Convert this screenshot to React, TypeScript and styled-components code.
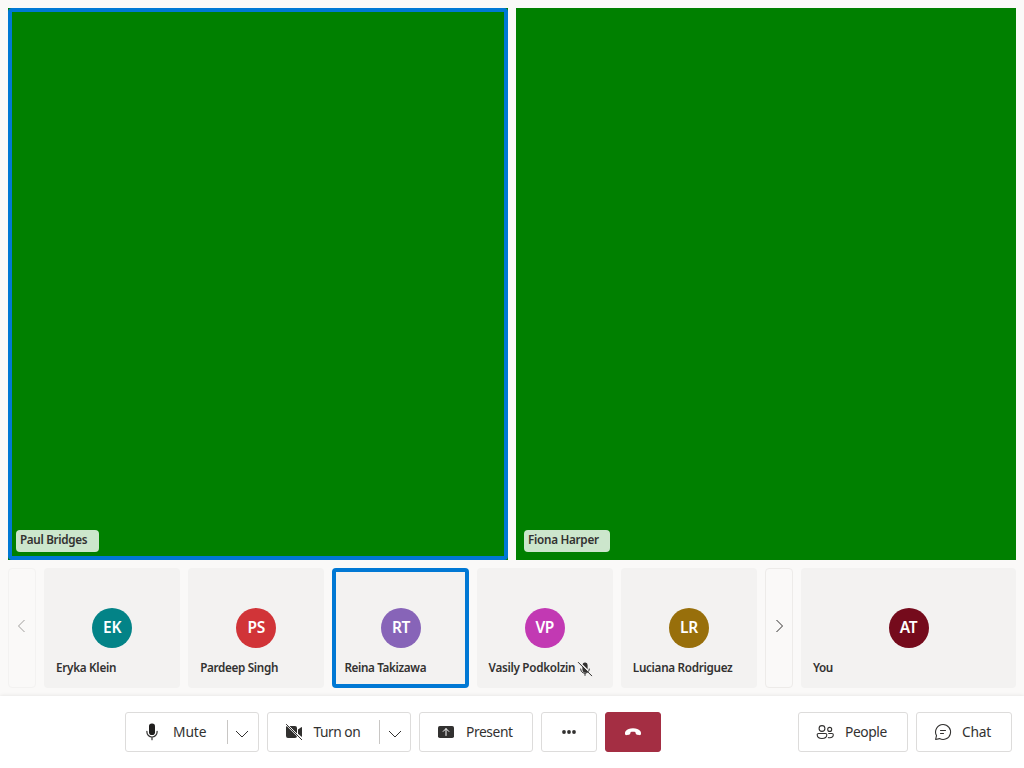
import React from 'react';
import styled, { createGlobalStyle, css } from 'styled-components';

const GlobalStyle = createGlobalStyle`
  *, *::before, *::after { box-sizing: border-box; }
  body {
    margin: 0;
    background: #faf9f8;
    color: #323130;
    font-family: 'Segoe UI', 'Noto Sans', 'Open Sans', sans-serif;
  }
  button { font: inherit; color: inherit; padding: 0; margin: 0; }
`;

const Screen = styled.div`
  display: flex;
  flex-direction: column;
  width: 1024px;
  height: 768px;
  overflow: hidden;
`;

const Stage = styled.main`
  flex: 1;
  min-height: 0;
  display: flex;
  flex-direction: column;
  gap: 8px;
  padding: 8px;
`;

const VideoGrid = styled.section`
  flex: 1;
  display: grid;
  grid-template-columns: 1fr 1fr;
  gap: 8px;
`;

const speakingRing = css`
  &::after {
    content: '';
    position: absolute;
    inset: 0;
    border: 4px solid #0078d4;
    border-radius: 4px;
  }
`;

const VideoTile = styled.article<{ $speaking?: boolean }>`
  position: relative;
  display: flex;
  align-items: flex-end;
  padding: 8px;
  background: #008000;
  ${(p) => p.$speaking && speakingRing}
`;

const NameLabel = styled.span<{ $spacing: number }>`
  font-size: 11.7px;
  line-height: 14px;
  padding-bottom: 2px;
  font-weight: 600;
  white-space: nowrap;
  letter-spacing: ${(p) => p.$spacing}px;
`;

const NameTag = styled.div<{ $width: number }>`
  width: ${(p) => p.$width}px;
  height: 22px;
  padding: 2px 4px;
  display: flex;
  background: rgba(255, 255, 255, 0.8);
  border-radius: 4px;
`;

const Strip = styled.section`
  display: flex;
  gap: 8px;
  height: 120px;
`;

const StripTiles = styled.div`
  flex: 1;
  display: grid;
  grid-template-columns: repeat(5, 1fr);
  gap: 8px;
`;

const PageButton = styled.button`
  width: 28px;
  display: flex;
  align-items: center;
  justify-content: center;
  padding-bottom: 4px;
  background: none;
  border: 1px solid #edebe9;
  border-radius: 4px;
  color: #323130;
  &:disabled { color: #a19f9d; border-color: #f3f2f1; }
`;

const PersonTile = styled.article<{ $speaking?: boolean; $self?: boolean }>`
  position: relative;
  display: flex;
  flex-direction: column;
  align-items: center;
  min-width: 0;
  width: ${(p) => (p.$self ? '215px' : 'auto')};
  padding: 40px 12px 0;
  background: #f3f2f1;
  border-radius: 4px;
  ${(p) => p.$speaking && speakingRing}
`;

const Avatar = styled.div<{ $color: string; $inset?: boolean }>`
  width: 40px;
  height: 40px;
  margin-left: ${(p) => (p.$inset ? 1 : 0)}px;
  border-radius: 50%;
  background: ${(p) => p.$color};
  color: #fff;
  font-size: 15.5px;
  line-height: 39px;
  font-weight: 600;
  letter-spacing: -0.35px;
  text-align: center;
`;

const PersonName = styled.div`
  align-self: stretch;
  display: flex;
  align-items: center;
  gap: 2px;
  height: 16px;
  margin-top: 12px;
  svg { flex: none; position: relative; top: 1px; }
`;

const ControlBar = styled.footer`
  display: flex;
  align-items: center;
  height: 72px;
  padding-right: 12px;
  gap: 12px;
  background: #fff;
  box-shadow: 0 0 4px rgba(0, 0, 0, 0.1);
`;

const CallControls = styled.div`
  flex: 1;
  display: flex;
  justify-content: center;
  gap: 8px;
`;

const SideControls = styled.div`
  display: flex;
  gap: 8px;
`;

const ControlButton = styled.button<{ $width: number; $danger?: boolean }>`
  width: ${(p) => p.$width}px;
  height: 40px;
  display: flex;
  align-items: center;
  padding: 0 0 0 ${(p) => (p.$width === 56 ? 17 : 16)}px;
  background: ${(p) => (p.$danger ? '#a42e43' : '#fff')};
  color: ${(p) => (p.$danger ? '#fff' : '#323130')};
  border: 1px solid ${(p) => (p.$danger ? '#a42e43' : '#dddcdb')};
  border-radius: 3px;
  svg { flex: none; }
`;

const ControlLabel = styled.span<{ $spacing: number; $gap?: number }>`
  flex: 1;
  margin-left: ${(p) => p.$gap ?? 10}px;
  text-align: left;
  font-size: 13.8px;
  line-height: 20px;
  white-space: nowrap;
  letter-spacing: ${(p) => p.$spacing}px;
`;

const SplitArrow = styled.span<{ $inset: number }>`
  width: 31px;
  height: 24px;
  display: flex;
  align-items: center;
  justify-content: center;
  padding: 4px ${(p) => p.$inset}px 0 0;
  border-left: 1px solid #c8c6c4;
`;

const Chevron = ({ dir }: { dir: 'left' | 'right' | 'down' }) => (
  <svg width="14" height="14" viewBox="0 0 14 14" fill="none" stroke="currentColor" strokeWidth="1">
    {dir === 'left' && <path d="M9.500 1l-6 6 6 6" />}
    {dir === 'right' && <path d="m4.500 1 6 6-6 6" />}
    {dir === 'down' && <path d="m1 4 6 6 6-6" />}
  </svg>
);

const MicIcon = () => (
  <svg width="20" height="20" viewBox="0 0 20 20">
    <rect x="7" y="1.500" width="6" height="11.500" rx="2.800" fill="#201f1e" />
    <path d="M4.900 9.300v.7a5.100 5 0 0 0 10.200 0v-.7M10 15v2.700" fill="none" stroke="currentColor" strokeWidth="1.200" strokeLinecap="round" />
  </svg>
);

const MicOffIcon = () => (
  <svg width="16" height="16" viewBox="0 0 16 16" fill="none" stroke="currentColor">
    <path d="M5.400 5.200 10.500 10.200A2.700 2.700 0 0 1 5.400 8.800zM5.500 3.300A2.600 2.600 0 0 1 10.600 4v4.300z" fill="currentColor" stroke="none" />
    <path d="M3.600 8a4.300 4.300 0 0 0 6.900 3.400M12.300 8q0 1.100-.6 2.200M8 12.400v2M1.300 1.400l13.400 13.400" strokeLinecap="round" />
  </svg>
);

const CameraOffIcon = () => (
  <svg width="20" height="20" viewBox="0 0 20 20" fill="currentColor">
    <path d="M2.700 4 13 14.300V14a2 2 0 0 1-2 2H4a2 2 0 0 1-2-2V5zM5.300 4h5.700A2 2 0 0 1 13 6v5.700zM14 7.500l3.200-2.300q.8-.4.8.5v8.600q0 .6-.5.500L14 11.700z" />
    <path d="m2.400 2.400 15.300 15.300" fill="none" stroke="currentColor" strokeLinecap="round" />
    <path d="m3.500 2.500 9.500 9.500" fill="none" stroke="#fff" strokeWidth=".7" />
  </svg>
);

const PresentIcon = () => (
  <svg width="20" height="20" viewBox="0 0 20 20">
    <rect x="2" y="4" width="16" height="12" rx="1.800" fill="currentColor" />
    <path d="M10 13.500V6.700M7.200 9.400 10 6.600l2.800 2.800" fill="none" stroke="#fff" strokeLinecap="round" strokeLinejoin="round" />
  </svg>
);

const MoreIcon = () => (
  <svg width="20" height="20" viewBox="0 0 20 20" fill="currentColor">
    <circle cx="5" cy="10" r="1.900" /><circle cx="10" cy="10" r="1.900" /><circle cx="15" cy="10" r="1.900" />
  </svg>
);

const HangUpIcon = () => (
  <svg width="20" height="20" viewBox="0 0 20 20" fill="currentColor">
    <path d="M10 6.200c3.500 0 5.700 1 7 2.500 1 1.100 1.200 2.500.9 3.500-.2.800-.9 1.100-1.700.9l-2.200-.4c-.7-.1-1.100-.5-1.300-1.200l-.4-1.400c-1.300-.5-3.300-.5-4.600 0l-.4 1.400c-.2.700-.6 1.100-1.300 1.200l-2.200.4c-.8.200-1.500-.1-1.700-.9-.3-1-.1-2.400.9-3.500 1.300-1.500 3.500-2.500 7-2.500z" />
  </svg>
);

const PeopleIcon = () => (
  <svg width="20" height="20" viewBox="0 0 20 20" fill="none" stroke="currentColor" strokeWidth="1.100">
    <circle cx="7" cy="6.500" r="2.900" />
    <circle cx="14.700" cy="7.400" r="2" />
    <path d="M3.500 11.500h7a1.300 1.300 0 0 1 1.300 1.300c0 2.500-2 3.700-4.800 3.700S2.200 15.300 2.200 12.800a1.300 1.300 0 0 1 1.300-1.300zM13.300 11.500h3.700a1.300 1.300 0 0 1 1.300 1.300c0 2-1.500 2.900-3.500 2.900-.7 0-1.300-.1-1.900-.3" />
  </svg>
);

const ChatIcon = () => (
  <svg width="20" height="20" viewBox="0 0 20 20" fill="none" stroke="currentColor" strokeWidth="1.100" strokeLinecap="round" strokeLinejoin="round">
    <path d="M10 2.500a7.500 7.500 0 1 1-3.500 14.100l-3.900.9.900-3.900A7.500 7.500 0 0 1 10 2.500zM7.500 8.500h5M7.500 11.500h3" />
  </svg>
);

interface Person {
  name: string;
  initials: string;
  color: string;
  spacing: number;
  speaking?: boolean;
  muted?: boolean;
}

const people: Person[] = [
  { name: 'Eryka Klein', initials: 'EK', color: '#038387', spacing: -0.28 },
  { name: 'Pardeep Singh', initials: 'PS', color: '#d13438', spacing: -0.33 },
  { name: 'Reina Takizawa', initials: 'RT', color: '#8764b8', spacing: -0.36, speaking: true },
  { name: 'Vasily Podkolzin', initials: 'VP', color: '#c239b3', spacing: -0.29, muted: true },
  { name: 'Luciana Rodriguez', initials: 'LR', color: '#986f0b', spacing: -0.3 },
];

const self: Person = { name: 'You', initials: 'AT', color: '#750b1c', spacing: -0.4 };

const Participant = ({ person, isSelf }: { person: Person; isSelf?: boolean }) => (
  <PersonTile $speaking={person.speaking} $self={isSelf}>
    <Avatar $color={person.color} $inset={person.speaking}>{person.initials}</Avatar>
    <PersonName>
      <NameLabel $spacing={person.spacing}>{person.name}</NameLabel>
      {person.muted && <MicOffIcon />}
    </PersonName>
  </PersonTile>
);

export default function App() {
  return (
    <Screen>
      <GlobalStyle />
      <Stage>
        <VideoGrid>
          <VideoTile $speaking>
            <NameTag $width={83}><NameLabel $spacing={-0.33}>Paul Bridges</NameLabel></NameTag>
          </VideoTile>
          <VideoTile>
            <NameTag $width={86}><NameLabel $spacing={-0.28}>Fiona Harper</NameLabel></NameTag>
          </VideoTile>
        </VideoGrid>
        <Strip>
          <PageButton disabled aria-label="Previous"><Chevron dir="left" /></PageButton>
          <StripTiles>
            {people.map((person) => <Participant key={person.name} person={person} />)}
          </StripTiles>
          <PageButton aria-label="Next"><Chevron dir="right" /></PageButton>
          <Participant person={self} isSelf />
        </Strip>
      </Stage>
      <ControlBar>
        <CallControls>
          <ControlButton $width={134}>
            <MicIcon /><ControlLabel $spacing={-0.1} $gap={11}>Mute</ControlLabel>
            <SplitArrow $inset={2}><Chevron dir="down" /></SplitArrow>
          </ControlButton>
          <ControlButton $width={144}>
            <CameraOffIcon /><ControlLabel $spacing={-0.5} $gap={9.5}>Turn on</ControlLabel>
            <SplitArrow $inset={1}><Chevron dir="down" /></SplitArrow>
          </ControlButton>
          <ControlButton $width={114}><PresentIcon /><ControlLabel $spacing={-0.4}>Present</ControlLabel></ControlButton>
          <ControlButton $width={56} aria-label="More"><MoreIcon /></ControlButton>
          <ControlButton $width={56} $danger aria-label="Leave"><HangUpIcon /></ControlButton>
        </CallControls>
        <SideControls>
          <ControlButton $width={110}><PeopleIcon /><ControlLabel $spacing={-0.4}>People</ControlLabel></ControlButton>
          <ControlButton $width={96}><ChatIcon /><ControlLabel $spacing={-0.25} $gap={9}>Chat</ControlLabel></ControlButton>
        </SideControls>
      </ControlBar>
    </Screen>
  );
}
